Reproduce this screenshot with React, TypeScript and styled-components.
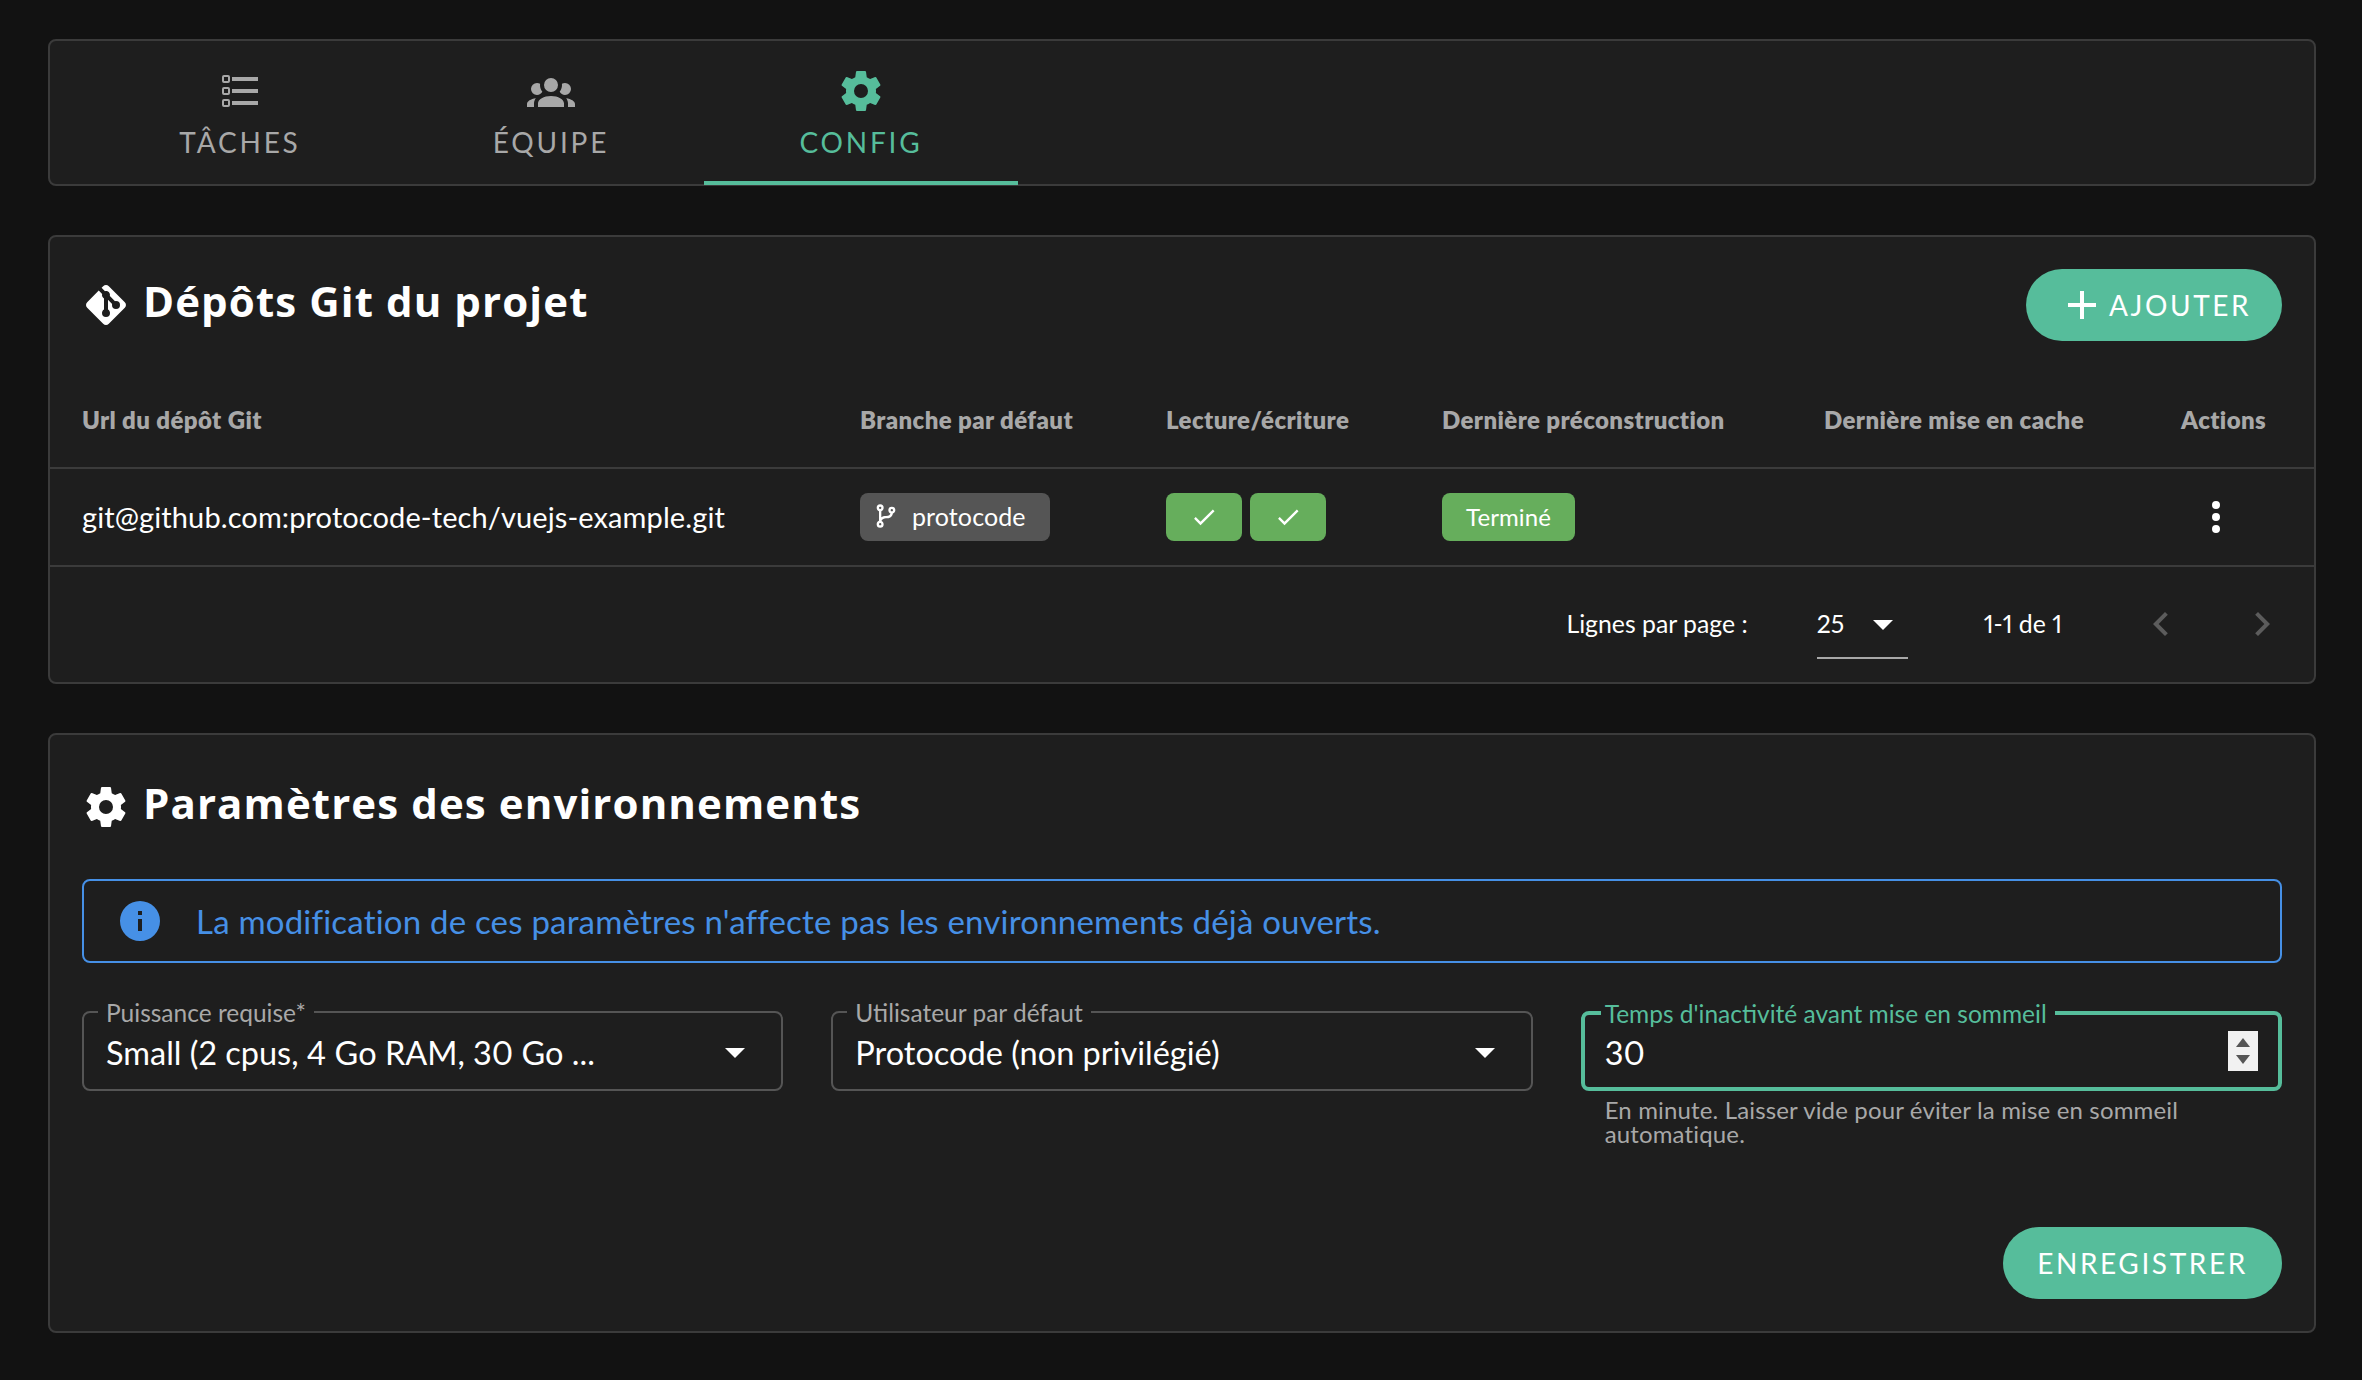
import React from "react";
import styled, { createGlobalStyle } from "styled-components";

const GREEN = "#56bd9b";
const BLUE = "#4690e6";
const SUCCESS = "#66ae5c";
const PANEL = "#1e1e1e";
const LINE = "#3b3b3b";
const MUTED = "#a8a8a8";

const ICONS = {
  list: "M21,19V17H8V19H21M21,13V11H8V13H21M8,7H21V5H8V7M4,5V7H6V5H4M3,5A1,1 0 0,1 4,4H6A1,1 0 0,1 7,5V7A1,1 0 0,1 6,8H4A1,1 0 0,1 3,7V5M4,11V13H6V11H4M3,11A1,1 0 0,1 4,10H6A1,1 0 0,1 7,11V13A1,1 0 0,1 6,14H4A1,1 0 0,1 3,13V11M4,17V19H6V17H4M3,17A1,1 0 0,1 4,16H6A1,1 0 0,1 7,17V19A1,1 0 0,1 6,20H4A1,1 0 0,1 3,19V17Z",
  group: "M12,5.5A3.5,3.5 0 0,1 15.5,9A3.5,3.5 0 0,1 12,12.5A3.5,3.5 0 0,1 8.5,9A3.5,3.5 0 0,1 12,5.5M5,8C5.56,8 6.08,8.15 6.53,8.42C6.38,9.85 6.8,11.27 7.66,12.38C7.16,13.34 6.16,14 5,14A3,3 0 0,1 2,11A3,3 0 0,1 5,8M19,8A3,3 0 0,1 22,11A3,3 0 0,1 19,14C17.84,14 16.84,13.34 16.34,12.38C17.2,11.27 17.62,9.85 17.47,8.42C17.92,8.15 18.44,8 19,8M5.5,18.25C5.5,16.18 8.41,14.5 12,14.5C15.59,14.5 18.5,16.18 18.5,18.25V20H5.5V18.25M0,20V18.5C0,17.11 1.89,15.94 4.45,15.6C3.86,16.28 3.5,17.22 3.5,18.25V20H0M24,20H20.5V18.25C20.5,17.22 20.14,16.28 19.55,15.6C22.11,15.94 24,17.11 24,18.5V20Z",
  cog: "M12,15.5A3.5,3.5 0 0,1 8.5,12A3.5,3.5 0 0,1 12,8.5A3.5,3.5 0 0,1 15.5,12A3.5,3.5 0 0,1 12,15.5M19.43,12.97C19.47,12.65 19.5,12.33 19.5,12C19.5,11.67 19.47,11.34 19.43,11L21.54,9.37C21.73,9.22 21.78,8.95 21.66,8.73L19.66,5.27C19.54,5.05 19.27,4.96 19.05,5.05L16.56,6.05C16.04,5.66 15.5,5.32 14.87,5.07L14.5,2.42C14.46,2.18 14.25,2 14,2H10C9.75,2 9.54,2.18 9.5,2.42L9.13,5.07C8.5,5.32 7.96,5.66 7.44,6.05L4.95,5.05C4.73,4.96 4.46,5.05 4.34,5.27L2.34,8.73C2.21,8.95 2.27,9.22 2.46,9.37L4.57,11C4.53,11.34 4.5,11.67 4.5,12C4.5,12.33 4.53,12.65 4.57,12.97L2.46,14.63C2.27,14.78 2.21,15.05 2.34,15.27L4.34,18.73C4.46,18.95 4.73,19.03 4.95,18.95L7.44,17.94C7.96,18.34 8.5,18.68 9.13,18.93L9.5,21.58C9.54,21.82 9.75,22 10,22H14C14.25,22 14.46,21.82 14.5,21.58L14.87,18.93C15.5,18.67 16.04,18.34 16.56,17.94L19.05,18.95C19.27,19.03 19.54,18.95 19.66,18.73L21.66,15.27C21.78,15.05 21.73,14.78 21.54,14.63L19.43,12.97Z",
  git: "M2.6,10.59L8.38,4.8L10.07,6.5C9.83,7.35 10.22,8.28 11,8.73V14.27C10.4,14.61 10,15.26 10,16A2,2 0 0,0 12,18A2,2 0 0,0 14,16C14,15.26 13.6,14.61 13,14.27V9.41L15.07,11.5C15,11.65 15,11.82 15,12A2,2 0 0,0 17,14A2,2 0 0,0 19,12A2,2 0 0,0 17,10C16.82,10 16.65,10 16.5,10.07L13.93,7.5C14.19,6.57 13.71,5.55 12.78,5.16C12.35,5 11.9,4.96 11.5,5.07L9.8,3.38L10.59,2.6C11.37,1.81 12.63,1.81 13.41,2.6L21.4,10.59C22.19,11.37 22.19,12.63 21.4,13.41L13.41,21.4C12.63,22.19 11.37,22.19 10.59,21.4L2.6,13.41C1.81,12.63 1.81,11.37 2.6,10.59Z",
  branch: "M13,14C9.64,14 8.54,15.35 8.18,16.24C9.25,16.7 10,17.76 10,19A3,3 0 0,1 7,22A3,3 0 0,1 4,19C4,17.69 4.83,16.58 6,16.17V7.83C4.83,7.42 4,6.31 4,5A3,3 0 0,1 7,2A3,3 0 0,1 10,5C10,6.31 9.17,7.42 8,7.83V13.12C8.88,12.47 10.16,12 12,12C14.67,12 15.56,10.66 15.85,9.77C14.77,9.32 14,8.25 14,7A3,3 0 0,1 17,4A3,3 0 0,1 20,7C20,8.34 19.12,9.5 17.91,9.86C17.65,11.29 16.68,14 13,14M7,18A1,1 0 0,0 6,19A1,1 0 0,0 7,20A1,1 0 0,0 8,19A1,1 0 0,0 7,18M7,4A1,1 0 0,0 6,5A1,1 0 0,0 7,6A1,1 0 0,0 8,5A1,1 0 0,0 7,4M17,6A1,1 0 0,0 16,7A1,1 0 0,0 17,8A1,1 0 0,0 18,7A1,1 0 0,0 17,6Z",
  info: "M13,9H11V7H13M13,17H11V11H13M12,2A10,10 0 0,0 2,12A10,10 0 0,0 12,22A10,10 0 0,0 22,12A10,10 0 0,0 12,2Z",
  dots: "M12,16A2,2 0 0,1 14,18A2,2 0 0,1 12,20A2,2 0 0,1 10,18A2,2 0 0,1 12,16M12,10A2,2 0 0,1 14,12A2,2 0 0,1 12,14A2,2 0 0,1 10,12A2,2 0 0,1 12,10M12,4A2,2 0 0,1 14,6A2,2 0 0,1 12,8A2,2 0 0,1 10,6A2,2 0 0,1 12,4Z",
  check: "M21,7L9,19L3.5,13.5L4.91,12.09L9,16.17L19.59,5.59L21,7Z",
  left: "M15.41,16.58L10.83,12L15.41,7.41L14,6L8,12L14,18L15.41,16.58Z",
  right: "M8.59,16.58L13.17,12L8.59,7.41L10,6L16,12L10,18L8.59,16.58Z",
  plus: "M19,13H13V19H11V13H5V11H11V5H13V11H19V13Z",
  down: "M7,10L12,15L17,10H7Z",
};

const Icon = ({ name, size = 48 }: { name: keyof typeof ICONS; size?: number }) => (
  <IconSvg viewBox="0 0 24 24" width={size} height={size} fill="currentColor">
    <path d={ICONS[name]} />
  </IconSvg>
);

const TABS = [
  { label: "TÂCHES", icon: "list", width: 316 },
  { label: "ÉQUIPE", icon: "group", width: 306 },
  { label: "CONFIG", icon: "cog", width: 314, active: true },
] as const;

const COLUMNS = [
  "Url du dépôt Git",
  "Branche par défaut",
  "Lecture/écriture",
  "Dernière préconstruction",
  "Dernière mise en cache",
  "Actions",
];

export default function App() {
  return (
    <Page>
      <GlobalStyle />
      <TabBar>
        {TABS.map((tab) => (
          <Tab key={tab.label} $width={tab.width} $active={"active" in tab}>
            <Icon name={tab.icon} />
            <span>{tab.label}</span>
          </Tab>
        ))}
      </TabBar>

      <Panel>
        <RepoHeader>
          <Title>
            <Icon name="git" />
            <h2>Dépôts Git du projet</h2>
          </Title>
          <AddButton>
            <Icon name="plus" />
            AJOUTER
          </AddButton>
        </RepoHeader>

        <HeadRow>
          {COLUMNS.map((col) => (
            <div key={col}>{col}</div>
          ))}
        </HeadRow>
        <BodyRow>
          <UrlCell>git@github.com:protocode-tech/vuejs-example.git</UrlCell>
          <div>
            <BranchChip>
              <Icon name="branch" size={28} />
              protocode
            </BranchChip>
          </div>
          <ChipGroup>
            <CheckChip>
              <Icon name="check" size={28} />
            </CheckChip>
            <CheckChip>
              <Icon name="check" size={28} />
            </CheckChip>
          </ChipGroup>
          <div>
            <StatusChip>Terminé</StatusChip>
          </div>
          <div />
          <ActionCell>
            <Icon name="dots" />
          </ActionCell>
        </BodyRow>
        <Pagination>
          <span>Lignes par page :</span>
          <PageSize>
            25
            <Icon name="down" />
          </PageSize>
          <PageRange>1-1 de 1</PageRange>
          <PageArrows>
            <Icon name="left" />
            <Icon name="right" />
          </PageArrows>
        </Pagination>
      </Panel>

      <SettingsPanel>
        <Title>
          <Icon name="cog" />
          <h2>Paramètres des environnements</h2>
        </Title>
        <Alert>
          <Icon name="info" />
          La modification de ces paramètres n'affecte pas les environnements déjà ouverts.
        </Alert>
        <FieldGrid>
          <div>
            <Field>
              <FieldLabel>Puissance requise*</FieldLabel>
              <FieldValue>Small (2 cpus, 4 Go RAM, 30 Go ...</FieldValue>
              <Icon name="down" />
            </Field>
          </div>
          <div>
            <Field>
              <FieldLabel>Utilisateur par défaut</FieldLabel>
              <FieldValue>Protocode (non privilégié)</FieldValue>
              <Icon name="down" />
            </Field>
          </div>
          <div>
            <Field $focused>
              <FieldLabel $focused>Temps d'inactivité avant mise en sommeil</FieldLabel>
              <FieldValue>30</FieldValue>
              <Spinner>
                <i />
                <b />
              </Spinner>
            </Field>
            <Hint>En minute. Laisser vide pour éviter la mise en sommeil automatique.</Hint>
          </div>
        </FieldGrid>
        <SaveRow>
          <SaveButton>ENREGISTRER</SaveButton>
        </SaveRow>
      </SettingsPanel>
    </Page>
  );
}

const GlobalStyle = createGlobalStyle`
  html, body {
    margin: 0;
    background: #121212;
  }
  * {
    box-sizing: border-box;
  }
  body {
    font-family: "Lato", "Liberation Sans", sans-serif;
    font-variant-numeric: proportional-nums;
    color: #fff;
  }
`;

const IconSvg = styled.svg`
  display: block;
  flex: none;
`;

const Page = styled.div`
  width: 2362px;
  height: 1380px;
  padding: 39px 46px 0 48px;
  display: flex;
  flex-direction: column;
  gap: 49px;
`;

const Panel = styled.section`
  background: ${PANEL};
  border: 2px solid ${LINE};
  border-radius: 8px;
`;

const TabBar = styled(Panel)`
  height: 147px;
  padding-left: 32px;
  display: flex;
`;

const Tab = styled.div<{ $width: number; $active?: boolean }>`
  width: ${(p) => p.$width}px;
  height: 144px;
  padding-top: 26px;
  display: flex;
  flex-direction: column;
  align-items: center;
  color: ${(p) => (p.$active ? GREEN : MUTED)};
  border-bottom: 4px solid ${(p) => (p.$active ? GREEN : "transparent")};
  font-size: 28px;
  font-weight: 400;
  letter-spacing: 2.8px;

  span {
    margin-top: 9px;
    line-height: 36px;
  }
`;

const RepoHeader = styled.div`
  padding: 32px 32px 0;
  margin-bottom: 30px;
  display: flex;
  align-items: center;
  justify-content: space-between;
`;

const Title = styled.div`
  display: flex;
  align-items: center;
  gap: 13px;

  h2 {
    margin: -8px 0 0;
    font-family: "Open Sans", "Liberation Sans", sans-serif;
    font-size: 42px;
    line-height: 48px;
    font-weight: 700;
    letter-spacing: 1.1px;
  }
`;

const PillButton = styled.button`
  height: 72px;
  border: 0;
  border-radius: 36px;
  background: ${GREEN};
  color: #fff;
  font-family: inherit;
  font-size: 28px;
  font-weight: 400;
  letter-spacing: 2.6px;
  display: flex;
  align-items: center;
`;

const AddButton = styled(PillButton)`
  width: 256px;
  padding: 0 0 0 32px;
  gap: 3px;
`;

const SaveButton = styled(PillButton)`
  width: 279px;
  justify-content: center;
`;

const TableRow = styled.div`
  display: grid;
  grid-template-columns: 778px 306px 276px 382px 357px 1fr;
  align-items: center;
  height: 98px;
  padding-left: 32px;
  border-bottom: 2px solid ${LINE};
`;

const HeadRow = styled(TableRow)`
  color: ${MUTED};
  font-size: 24px;
  font-weight: 800;
  letter-spacing: 0.4px;
`;

const BodyRow = styled(TableRow)`
  font-size: 29px;
  font-weight: 400;
  letter-spacing: 0.1px;
`;

const UrlCell = styled.div`
  margin-bottom: 2px;
`;

const Chip = styled.span`
  height: 48px;
  border-radius: 8px;
  display: inline-flex;
  align-items: center;
  color: #fff;
  font-size: 24px;
`;

const BranchChip = styled(Chip)`
  width: 190px;
  padding: 0 0 2px 12px;
  gap: 12px;
  background: #555;
  font-size: 25px;
`;

const ChipGroup = styled.div`
  display: flex;
  gap: 8px;
`;

const CheckChip = styled(Chip)`
  width: 76px;
  justify-content: center;
  background: ${SUCCESS};
`;

const StatusChip = styled(Chip)`
  width: 133px;
  padding-bottom: 2px;
  justify-content: center;
  background: ${SUCCESS};
`;

const ActionCell = styled.div`
  padding-left: 11px;
`;

const Pagination = styled.div`
  height: 115px;
  padding: 0 28px 2px 0;
  display: flex;
  align-items: center;
  justify-content: flex-end;
  font-size: 24.8px;
`;

const PageSize = styled.div`
  width: 91px;
  height: 50px;
  margin: 20px 0 0 69px;
  padding-bottom: 18px;
  display: flex;
  align-items: center;
  border-bottom: 2px solid ${MUTED};

  svg {
    margin-left: 15px;
  }
`;

const PageRange = styled.span`
  margin: 0 75px 0 76px;
`;

const PageArrows = styled.div`
  display: flex;
  gap: 53px;
  color: #5c5c5c;
`;

const SettingsPanel = styled(Panel)`
  height: 600px;
  padding: 48px 32px 32px;
  display: flex;
  flex-direction: column;
`;

const Alert = styled.div`
  height: 84px;
  margin-top: 48px;
  padding-left: 32px;
  display: flex;
  align-items: center;
  gap: 32px;
  border: 2px solid ${BLUE};
  border-radius: 8px;
  color: ${BLUE};
  font-size: 33px;
  letter-spacing: 0.2px;
`;

const FieldGrid = styled.div`
  margin-top: 48px;
  display: grid;
  grid-template-columns: repeat(3, 1fr);
  gap: 48px;
`;

const Field = styled.div<{ $focused?: boolean }>`
  position: relative;
  height: 80px;
  padding: 2px 22px 0 ${(p) => (p.$focused ? 20 : 22)}px;
  display: flex;
  align-items: center;
  border: ${(p) => (p.$focused ? `4px solid ${GREEN}` : "2px solid #555")};
  border-radius: 8px;
`;

const FieldLabel = styled.label<{ $focused?: boolean }>`
  position: absolute;
  top: ${(p) => (p.$focused ? -15 : -14)}px;
  left: ${(p) => (p.$focused ? 16 : 14)}px;
  padding: ${(p) => (p.$focused ? "0 8px 0 4px" : "0 8px")};
  background: ${PANEL};
  color: ${(p) => (p.$focused ? GREEN : MUTED)};
  font-size: 24.5px;
  line-height: 28px;
`;

const FieldValue = styled.div`
  flex: 1;
  font-size: 32.5px;
`;

const Spinner = styled.div`
  width: 30px;
  height: 40px;
  margin: -2px -2px 0 0;
  background: #f1f1f1;
  display: flex;
  flex-direction: column;
  align-items: center;
  justify-content: space-evenly;

  i,
  b {
    display: block;
    border-left: 7px solid transparent;
    border-right: 7px solid transparent;
  }

  i {
    border-bottom: 9px solid #555;
  }

  b {
    border-top: 9px solid #555;
  }
`;

const Hint = styled.div`
  margin-top: 7px;
  padding: 0 24px;
  color: ${MUTED};
  font-size: 24px;
  line-height: 24px;
  letter-spacing: 0.15px;
`;

const SaveRow = styled.div`
  margin-top: auto;
  display: flex;
  justify-content: flex-end;
`;
